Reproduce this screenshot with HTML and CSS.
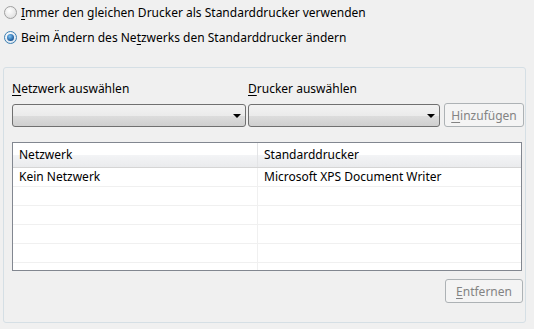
FILE: index.html
```html
<!DOCTYPE html>
<html lang="de">

<head>
    <meta charset="UTF-8">
    <title>Standarddrucker</title>
    <link rel="stylesheet" href="styles.css">
</head>

<body>
    <div class="options">
        <label class="radio"><span class="dot"></span><span><u>I</u>mmer den gleichen Drucker als Standarddrucker verwenden</span></label>
        <label class="radio checked"><span class="dot"></span><span>Beim Ändern des Ne<u>t</u>zwerks den Standarddrucker ändern</span></label>
    </div>

    <div class="panel">
        <div class="pickers">
            <div class="picker net">
                <div class="caption"><u>N</u>etzwerk auswählen</div>
                <div class="combo"><span class="arrow"></span></div>
            </div>
            <div class="picker printer">
                <div class="caption"><u>D</u>rucker auswählen</div>
                <div class="combo"><span class="arrow"></span></div>
            </div>
            <button class="btn add" disabled><u>H</u>inzufügen</button>
        </div>

        <div class="list">
            <div class="row head">
                <div class="cell">Netzwerk</div>
                <div class="cell">Standarddrucker</div>
            </div>
            <div class="row">
                <div class="cell">Kein Netzwerk</div>
                <div class="cell">Microsoft XPS Document Writer</div>
            </div>
            <div class="row"><div class="cell"></div><div class="cell"></div></div>
            <div class="row"><div class="cell"></div><div class="cell"></div></div>
            <div class="row"><div class="cell"></div><div class="cell"></div></div>
            <div class="row"><div class="cell"></div><div class="cell"></div></div>
            <div class="row"><div class="cell"></div><div class="cell"></div></div>
        </div>

        <div class="actions">
            <button class="btn remove" disabled><u>E</u>ntfernen</button>
        </div>
    </div>
</body>

</html>
```

FILE: styles.css
```css
body {
    margin: 0;
    background: #f0f0f0;
    font-family: "Noto Sans", sans-serif;
    font-size: 12px;
    color: #000;
    width: 534px;
    height: 329px;
    overflow: hidden;
}

u {
    text-decoration: underline;
    text-underline-offset: 2px;
}

.options {
    padding: 3px 0 0 4px;
    display: flex;
    flex-direction: column;
    gap: 7px;
}

.radio {
    display: flex;
    align-items: center;
    gap: 4px;
    height: 18px;
}

.dot {
    width: 11px;
    height: 11px;
    border-radius: 50%;
    border: 1px solid #a0a0a0;
    background: radial-gradient(circle at 40% 35%, #ffffff, #e4e4e4 70%, #d0d0d0);
    position: relative;
}

.checked .dot {
    border-color: #3c7fb1;
    background: radial-gradient(circle at 40% 35%, #ffffff, #dfe8f1 70%, #b9cde0);
}

.checked .dot::after {
    content: "";
    position: absolute;
    left: 2px;
    top: 2px;
    width: 7px;
    height: 7px;
    border-radius: 50%;
    background: radial-gradient(circle at 40% 35%, #7ec4f5, #1c5a9a 70%, #0d3a6a);
}

.panel {
    margin: 21px 0 0 3px;
    width: 523px;
    height: 256px;
    border: 1px solid #d5dfe5;
    border-radius: 3px;
    box-sizing: border-box;
    padding: 13px 0 0 8px;
}

.pickers {
    display: flex;
    align-items: flex-end;
}

.picker {
    display: flex;
    flex-direction: column;
    flex-shrink: 0;
}

.net {
    width: 234px;
    margin-right: 2px;
}

.printer {
    width: 192px;
    margin-right: 4px;
}

.caption {
    height: 16px;
    line-height: 16px;
    margin-bottom: 7px;
}

.combo {
    height: 23px;
    box-sizing: border-box;
    border: 1px solid #707070;
    border-radius: 3px;
    background: linear-gradient(#f2f2f2 0%, #ebebeb 50%, #dddddd 51%, #cfcfcf 100%);
    position: relative;
}

.arrow {
    position: absolute;
    right: 4px;
    top: 9px;
    border-left: 4px solid transparent;
    border-right: 4px solid transparent;
    border-top: 4px solid #000;
}

.btn {
    font-family: "Noto Sans", sans-serif;
    font-size: 12px;
    color: #838383;
    background: #f4f4f4;
    border: 1px solid #adb2b5;
    border-radius: 3px;
    padding: 0;
    height: 24px;
    flex-shrink: 0;
}

.add {
    width: 80px;
}

.list {
    margin-top: 15px;
    width: 510px;
    height: 129px;
    box-sizing: border-box;
    border: 1px solid #828790;
    background: #fff;
    overflow: hidden;
}

.row {
    display: grid;
    grid-template-columns: 245px 1fr;
    height: 19px;
    box-sizing: border-box;
    border-bottom: 1px solid #f0f0f0;
}

.row.head {
    height: 25px;
    border-bottom: 1px solid #d5d5d5;
    background: linear-gradient(#ffffff 0%, #ffffff 50%, #f3f4f6 51%, #eaebed 100%);
}

.cell {
    padding-left: 6px;
    line-height: 18px;
    border-right: 1px solid #f0f0f0;
}

.head .cell {
    line-height: 24px;
    border-right-color: #e3e4e6;
}

.cell:last-child {
    border-right: none;
}

.actions {
    display: flex;
    justify-content: flex-end;
    padding: 8px 2px 0 0;
}

.remove {
    width: 78px;
}
```
